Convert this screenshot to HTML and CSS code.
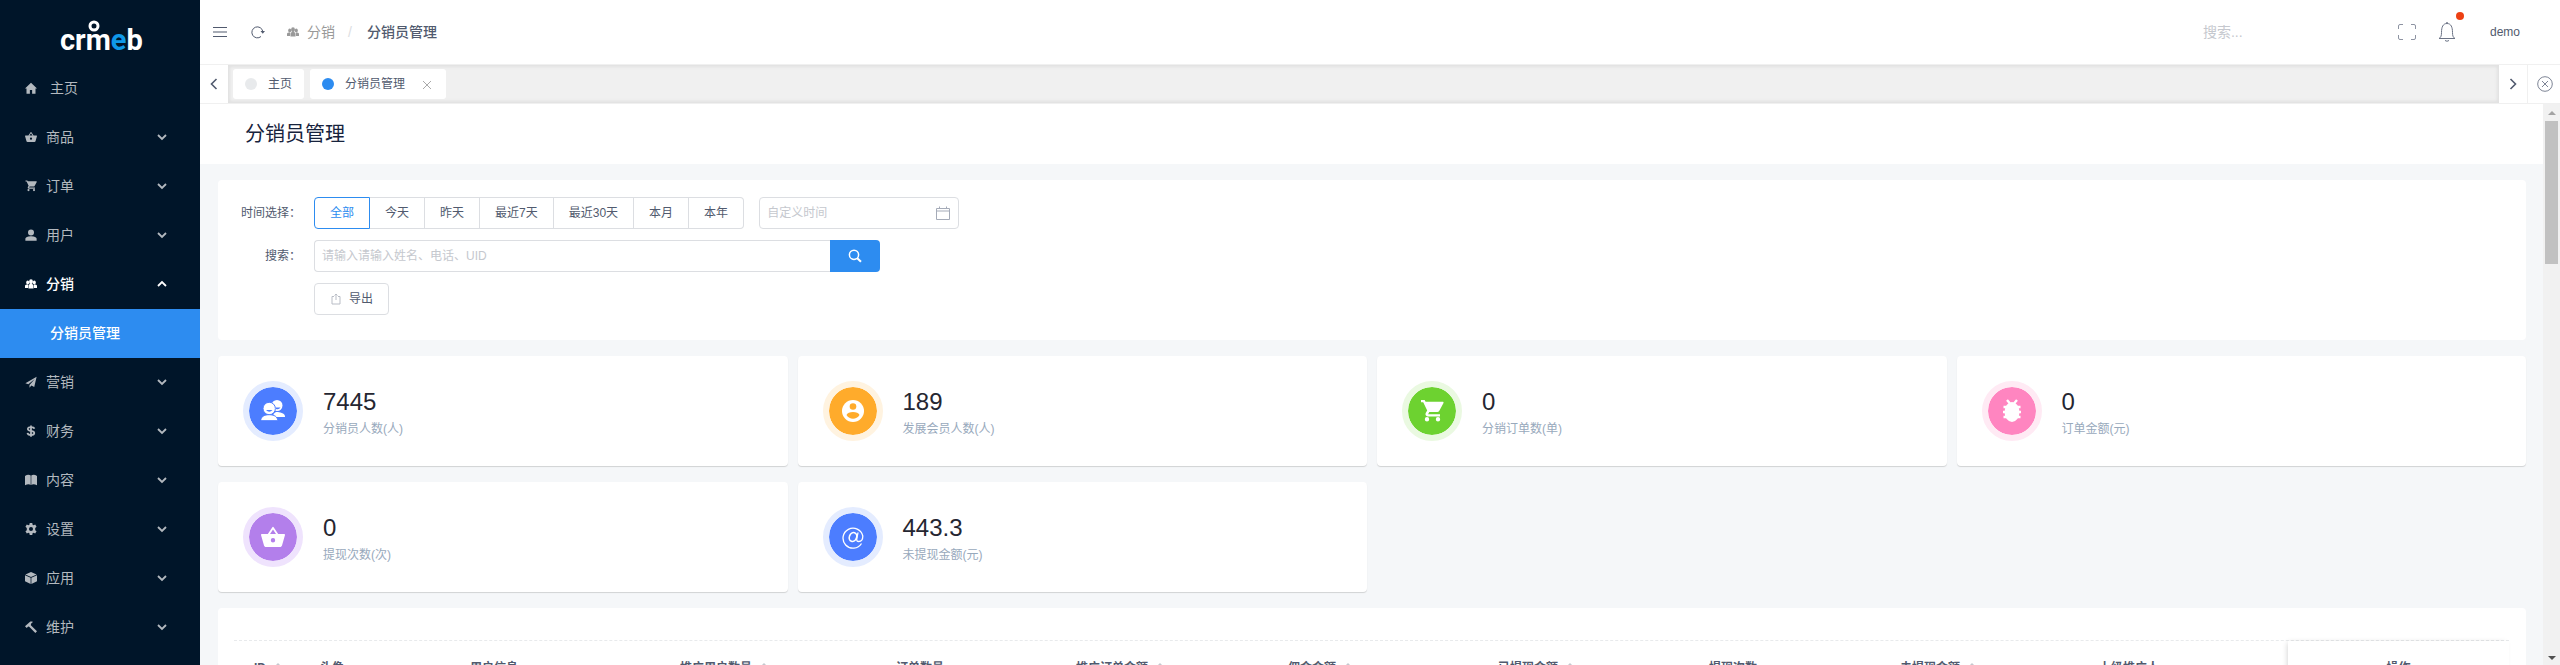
FILE: index.html
```html
<!DOCTYPE html>
<html lang="zh-CN">
<head>
<meta charset="utf-8">
<title>分销员管理</title>
<link rel="stylesheet" href="styles.css">
</head>
<body>
<svg class="sprite" aria-hidden="true">
  <symbol id="down" viewBox="0 0 12 12"><path d="M2 4l4 4 4-4" fill="none" stroke="currentColor" stroke-width="1.8"/></symbol>
  <symbol id="up" viewBox="0 0 12 12"><path d="M2 8l4-4 4 4" fill="none" stroke="currentColor" stroke-width="1.8"/></symbol>
  <symbol id="home" viewBox="0 0 16 16"><path d="M8 1L0 8.500h2V15.500h4.500v-5h3v5H14V8.500h2z"/></symbol>
  <symbol id="basket" viewBox="0 0 24 24"><path fill-rule="evenodd" d="M17.2 9L12.8 2.4a1 1 0 0 0-1.6 0L6.800 9H1c-.6 0-1 .4-1 1l3 10.500c.2.900 1 1.500 2 1.500h14c1 0 1.800-.6 2-1.500L24 10c0-.6-.4-1-1-1zM9 9l3-4.500L15 9zm3 8.500a2.200 2.200 0 1 1 0-4.400 2.200 2.200 0 0 1 0 4.400z"/></symbol>
  <symbol id="cart" viewBox="0 0 24 24"><path d="M7 18a2.200 2.200 0 1 0 0 4.400A2.200 2.200 0 0 0 7 18zM1 1v2.200h2.200l4 8.200-1.500 2.600c-.8 1.500.3 3.400 2 3.400H20v-2.200H8.100l1.200-2.200h8c.8 0 1.500-.4 1.900-1.100L23.500 4c.3-.6-.1-1.300-.8-1.300H5.600L4.600 1zm17 17a2.200 2.200 0 1 0 0 4.400 2.200 2.200 0 0 0 0-4.400z"/></symbol>
  <symbol id="person" viewBox="0 0 16 16"><circle cx="8" cy="4.500" r="4"/><path d="M.5 15.500v-2.500c0-2.400 4-3.500 7.500-3.500s7.500 1.100 7.500 3.500v2.500z"/></symbol>
  <symbol id="group" viewBox="0 0 16 16"><ellipse cx="8" cy="5" rx="2.600" ry="3.200"/><path d="M4.600 14v-3.800C4.600 8.800 6 8 8 8s3.400.8 3.400 2.200V14z"/><ellipse cx="3.600" cy="6" rx="2" ry="2.600"/><ellipse cx="12.400" cy="6" rx="2" ry="2.600"/><path d="M4 8.500v4.700H0v-2.800C0 9 1.800 8.500 4 8.500zM12 8.500v4.700h4v-2.800c0-1.400-1.800-1.900-4-1.900z"/></symbol>
  <symbol id="plane" viewBox="0 0 16 16"><path d="M15.500 1L.5 9.500l4 1.500L13 4 6 12v3.500l2.500-2.700 3.800 1.700z"/></symbol>
  <symbol id="dollar" viewBox="0 0 16 16"><path d="M12.500 5C12 3.200 10.500 2.700 8 2.700S3.800 3.500 3.800 5.200c0 3.800 8.600 1.600 8.600 5.400 0 1.900-1.800 2.700-4.400 2.700S3.600 12.500 3.300 10.500M8 .5v15" fill="none" stroke="currentColor" stroke-width="2.300"/></symbol>
  <symbol id="book" viewBox="0 0 16 16"><path d="M0 2.500C3 .5 6 .8 7.600 2v12.500C6 13.300 3 13.300 0 15zM16 2.500C13 .5 10 .8 8.400 2v12.500c1.600-1.200 4.600-1.200 7.600.5z"/></symbol>
  <symbol id="gear" viewBox="0 0 16 16"><path fill-rule="evenodd" d="M6.300 0h3.400l.4 2.300 1.300.8L13.600 2l1.800 3-1.800 1.500v3L15.400 11l-1.800 3-2.200-1-1.300.8-.4 2.200H6.300l-.4-2.200-1.300-.8-2.200 1-1.800-3 1.800-1.500v-3L.6 5l1.800-3 2.200 1.100 1.300-.8zM8 5.300a2.700 2.700 0 1 0 0 5.400 2.700 2.700 0 0 0 0-5.400z"/></symbol>
  <symbol id="cube" viewBox="0 0 16 16"><path d="M8 0l7.500 3.200L8 6.500.5 3.200zM0 4.200l7.500 3.500V16L0 12.200zM16 4.200L8.500 7.700V16l7.500-3.800z"/></symbol>
  <symbol id="hammer" viewBox="0 0 16 16"><path d="M0 7l6-5.500C7.500.5 9.500.7 10.500 1.200L8 3.600l-.2 1.900L16 13.500 13.800 16 5.600 7.500 4.200 7.400 2.300 9.300z"/></symbol>
</svg>
<div class="app">
  <aside class="side">
    <div class="logo"><span>crm</span><span class="logo-e">e</span><span>b</span><svg class="logo-ring" viewBox="0 0 12 12"><circle cx="6" cy="6" r="4" fill="none" stroke="#fff" stroke-width="3"/></svg></div>
    <nav>
      <a class="item home" href="#"><svg class="ico"><use href="#home"/></svg><span>主页</span></a>
      <a class="item" href="#"><svg class="ico"><use href="#basket"/></svg><span>商品</span><svg class="arrow"><use href="#down"/></svg></a>
      <a class="item" href="#"><svg class="ico"><use href="#cart"/></svg><span>订单</span><svg class="arrow"><use href="#down"/></svg></a>
      <a class="item" href="#"><svg class="ico"><use href="#person"/></svg><span>用户</span><svg class="arrow"><use href="#down"/></svg></a>
      <a class="item open" href="#"><svg class="ico"><use href="#group"/></svg><span>分销</span><svg class="arrow"><use href="#up"/></svg></a>
      <a class="sub" href="#">分销员管理</a>
      <a class="item" href="#"><svg class="ico"><use href="#plane"/></svg><span>营销</span><svg class="arrow"><use href="#down"/></svg></a>
      <a class="item" href="#"><svg class="ico"><use href="#dollar"/></svg><span>财务</span><svg class="arrow"><use href="#down"/></svg></a>
      <a class="item" href="#"><svg class="ico"><use href="#book"/></svg><span>内容</span><svg class="arrow"><use href="#down"/></svg></a>
      <a class="item" href="#"><svg class="ico"><use href="#gear"/></svg><span>设置</span><svg class="arrow"><use href="#down"/></svg></a>
      <a class="item" href="#"><svg class="ico"><use href="#cube"/></svg><span>应用</span><svg class="arrow"><use href="#down"/></svg></a>
      <a class="item" href="#"><svg class="ico"><use href="#hammer"/></svg><span>维护</span><svg class="arrow"><use href="#down"/></svg></a>
    </nav>
  </aside>

  <div class="main">
    <header class="top">
      <button class="plain" aria-label="菜单"><svg width="14" height="12" viewBox="0 0 14 12"><path d="M0 1.500h14M0 6h14M0 10.500h14" stroke="#515a6e" stroke-width="1.200"/></svg></button>
      <button class="plain refresh" aria-label="刷新"><svg width="14" height="14" viewBox="0 0 14 14"><path d="M10 11.500A5.500 5.500 0 1 1 11.800 6.500" fill="none" stroke="#515a6e"/><path d="M9.500 6H14l-2.200 2.800z" fill="#515a6e"/></svg></button>
      <div class="crumbs"><svg class="ico"><use href="#group"/></svg><span>分销</span><span class="slash">/</span><strong>分销员管理</strong></div>
      <input class="top-search" type="text" placeholder="搜索..." aria-label="搜索">
      <button class="plain" aria-label="全屏"><svg width="18" height="16" viewBox="0 0 18 16"><path d="M.5 5V2Q.5.5 2 .5h3M13 .5h3Q17.500.5 17.500 2v3M17.500 11v3q0 1.500-1.500 1.500h-3M5 15.500H2Q.5 15.500.5 14v-3" fill="none" stroke="#8d93a2"/></svg></button>
      <button class="plain bell" aria-label="通知"><svg width="18" height="20" viewBox="0 0 18 20"><path d="M1 16.500c2-1 2.500-3 2.500-6C3.500 5 5 1.500 9 1.500s5.500 3.500 5.500 9c0 3 .5 5 2.500 6zM7 18.500q2 1.500 4 0M8 .8h2" fill="none" stroke="#6b7385"/></svg><i class="dot"></i></button>
      <a class="user" href="#">demo</a>
    </header>

    <div class="tabs">
      <button class="tab-nav" aria-label="向左"><svg width="8" height="12" viewBox="0 0 8 12"><path d="M6.500 1l-5 5 5 5" fill="none" stroke="#515a6e" stroke-width="1.600"/></svg></button>
      <div class="strip">
        <a class="tab" href="#"><i></i><span>主页</span></a>
        <a class="tab on" href="#"><i></i><span>分销员管理</span><svg width="8" height="8" viewBox="0 0 8 8"><path d="M0 0l8 8M8 0L0 8" stroke="#aaa"/></svg></a>
      </div>
      <button class="tab-nav" aria-label="向右"><svg width="8" height="12" viewBox="0 0 8 12"><path d="M1.500 1l5 5-5 5" fill="none" stroke="#515a6e" stroke-width="1.600"/></svg></button>
      <button class="tab-close" aria-label="关闭"><svg width="16" height="16" viewBox="0 0 16 16"><path d="M5 5l6 6M11 5l-6 6" stroke="#7d8495"/><circle cx="8" cy="8" r="7.300" fill="none" stroke="#7d8495"/></svg></button>
    </div>

    <div class="view">
      <main class="page">
        <h1>分销员管理</h1>
        <div class="body">
          <form class="panel filters">
            <div class="row">
              <span class="lab">时间选择：</span>
              <div class="radios" role="radiogroup" aria-label="时间选择">
                <label><input type="radio" name="t" checked>全部</label>
                <label><input type="radio" name="t">今天</label>
                <label><input type="radio" name="t">昨天</label>
                <label><input type="radio" name="t">最近7天</label>
                <label><input type="radio" name="t">最近30天</label>
                <label><input type="radio" name="t">本月</label>
                <label><input type="radio" name="t">本年</label>
              </div>
              <div class="date"><input type="text" placeholder="自定义时间" aria-label="自定义时间"><svg width="14" height="14" viewBox="0 0 14 14"><path d="M.5 2.500h13v11H.5zM.5 5h13M3.500.5v2M10.500.5v2" fill="none" stroke="#a5abb8"/></svg></div>
            </div>
            <div class="row">
              <label class="lab" for="q">搜索：</label>
              <div class="search"><input id="q" type="text" placeholder="请输入请输入姓名、电话、UID"><button type="button" aria-label="搜索"><svg width="14" height="14" viewBox="0 0 14 14"><circle cx="6" cy="5.800" r="4.600" fill="none" stroke="#fff" stroke-width="1.500"/><path d="M9 9l4 3.800" stroke="#fff" stroke-width="2"/></svg></button></div>
            </div>
            <div class="row">
              <span class="lab"></span>
              <button class="export" type="button"><svg width="10" height="12" viewBox="0 0 10 12"><path d="M3 3.500H1v7.500h8V3.500H7M5 7V1M3.500 2.500L5 1l1.500 1.500" fill="none" stroke="#b9bdc6"/></svg>导出</button>
            </div>
          </form>

          <section class="stats">
            <div class="stat blue"><div class="ring"><svg viewBox="0 0 24 24"><circle cx="16" cy="6.500" r="5.500"/><path d="M12 18c0-3.500 2-5 4-5s8 1 8 4.500V18z"/><g stroke="#4c7dff"><circle cx="8.200" cy="9.500" r="6.200"/><path d="M-.3 21.700c0-4 3.500-6 8.500-6s8.500 2 8.500 6z"/></g><path d="M5 11h6.500q-3.200 3.500-6.500 0zM15 8.500h4.500Q18 11 15 10z" fill="#4c7dff"/></svg></div><div class="info"><b>7445</b><p>分销员人数(人)</p></div></div>
            <div class="stat orange"><div class="ring"><svg viewBox="0 0 24 24"><circle cx="12" cy="12" r="11"/><circle cx="12" cy="7.500" r="3.300" fill="#ffab2b"/><path d="M5.500 16c1-4 12-4 13 0-3 5-10 5-13 0z" fill="#ffab2b"/></svg></div><div class="info"><b>189</b><p>发展会员人数(人)</p></div></div>
            <div class="stat green"><div class="ring"><svg><use href="#cart"/></svg></div><div class="info"><b>0</b><p>分销订单数(单)</p></div></div>
            <div class="stat pink"><div class="ring"><svg viewBox="0 0 24 24"><ellipse cx="12" cy="13" rx="7.500" ry="10"/><path d="M3.500 8h17M3 13h18M3.500 18h17" stroke="#fff" stroke-width="2.600"/><path d="M7 1l3 3.500M17 1l-3 3.500" stroke="#fff" stroke-width="2.400"/></svg></div><div class="info"><b>0</b><p>订单金额(元)</p></div></div>
            <div class="stat purple"><div class="ring"><svg><use href="#basket"/></svg></div><div class="info"><b>0</b><p>提现次数(次)</p></div></div>
            <div class="stat blue"><div class="ring"><svg viewBox="0 0 24 24"><g fill="none" stroke="#fff"><path d="M20.500 18.500A10 10 0 1 1 21.800 11c0 4-2.200 5.500-4 5.500s-2.300-1-2-2.800l1.200-6.200" stroke-width="1.300"/><ellipse cx="12" cy="12" rx="3.600" ry="4.600" transform="rotate(20 12 12)" stroke-width="1.600"/></g></svg></div><div class="info"><b>443.3</b><p>未提现金额(元)</p></div></div>
          </section>

          <section class="panel list">
            <table>
              <colgroup><col class="c66"><col class="c150"><col class="c210"><col class="c216"><col class="c180"><col class="c212"><col class="c210"><col class="c211"><col class="c191"><col class="c199"><col class="c209"><col class="c221"></colgroup>
              <thead><tr>
                <th class="sort">ID</th><th>头像</th><th>用户信息</th><th class="sort">推广用户数量</th><th>订单数量</th><th class="sort">推广订单金额</th><th class="sort">佣金金额</th><th class="sort">已提现金额</th><th>提现次数</th><th class="sort">未提现金额</th><th>上级推广人</th><th class="fixed">操作</th>
              </tr></thead>
            </table>
          </section>
        </div>
      </main>
      <div class="scroll" aria-hidden="true"><i class="tri up"></i><i class="thumb"></i><i class="tri down"></i></div>
    </div>
  </div>
</div>
</body>
</html>
```
FILE: styles.css
```css
* { box-sizing: border-box; }
body {
  margin: 0;
  font: 12px/18px "Liberation Sans", "Noto Sans CJK SC", sans-serif;
  color: #515a6e;
  overflow: hidden;
}
a { color: inherit; text-decoration: none; }
button, input { font: inherit; color: inherit; }
button { cursor: pointer; }
svg { fill: currentColor; flex: none; display: block; }
.sprite { position: absolute; width: 0; height: 0; }
input::placeholder { color: #c5c8ce; opacity: 1; }

.app { display: flex; height: 100vh; overflow: hidden; }

/* sidebar */
.side { width: 200px; flex: none; background: #001529; color: #b3b9bf; }
.logo {
  position: relative;
  height: 64px;
  padding: 18px 0 0 60px;
  display: flex;
  font: 700 29px/44px Roboto, sans-serif;
  color: #fff;
}
.logo-e { color: #0f98e8; }
.logo-ring { position: absolute; left: 88px; top: 20px; width: 12px; height: 12px; }
.item {
  display: flex;
  align-items: center;
  gap: 9px;
  height: 49px;
  padding: 0 32px 2px 25px;
  font-size: 14px;
}
.home { gap: 13px; }
.ico { width: 12px; height: 12px; }
.arrow { width: 12px; height: 12px; margin-left: auto; }
.open { color: #fff; font-weight: 500; }
.sub {
  display: flex;
  align-items: center;
  height: 49px;
  padding: 0 0 2px 50px;
  background: #2d8cf0;
  color: #fff;
  font-size: 14px;
  font-weight: 500;
}

/* header */
.main { flex: 1; min-width: 0; display: flex; flex-direction: column; }
.top { display: flex; align-items: center; height: 64px; flex: none; padding: 0 40px 0 13px; }
.plain { border: 0; padding: 0; background: none; }
.refresh { margin-left: 24px; }
.crumbs { display: flex; align-items: center; margin-left: 22px; font-size: 14px; color: #999; }
.crumbs span { margin-left: 8px; }
.crumbs .slash { margin: 0 15px 0 13px; color: #dcdee2; }
.crumbs strong { font-weight: 500; color: #515a6e; }
.top-search { width: 180px; margin: 0 15px 0 auto; padding: 0; border: 0; outline: 0; font-size: 14px; }
.bell { position: relative; margin: 0 34px 0 22px; }
.dot { position: absolute; right: -8px; top: -10px; width: 8px; height: 8px; border-radius: 50%; background: #ed4014; }

/* tabs */
.tabs { display: flex; height: 40px; flex: none; border: solid #f0f0f0; border-width: 1px 0; }
.tab-nav { width: 28px; border: 0; background: #fff; padding: 0; display: grid; place-items: center; }
.strip {
  flex: 1;
  display: flex;
  align-items: center;
  gap: 6px;
  padding-left: 5px;
  background: #f0f0f0;
  box-shadow: inset 0 0 3px 2px rgba(100, 100, 100, .1);
}
.tab { display: flex; align-items: center; height: 30px; padding: 0 12px; background: #fff; border-radius: 3px; }
.tab i { width: 12px; height: 12px; margin-right: 11px; border-radius: 50%; background: #e8eaec; }
.tab svg { margin: 2px 3px 0 18px; }
.on i { background: #2d8cf0; }
.tab-close { width: 33px; border: 0; border-left: 1px solid #f0f0f0; background: #fff; padding: 0 0 0 2px; display: grid; place-items: center; }

/* page */
.view { flex: 1; min-height: 0; display: flex; }
.page { flex: 1; min-width: 0; overflow: hidden; background: #f5f7f9; }
h1 { margin: 0; padding: 0 45px; font-size: 20px; font-weight: 400; line-height: 60px; background: #fff; color: #17233d; }
.body { display: flex; flex-direction: column; gap: 16px; padding: 16px 17px 16px 18px; }
.panel { background: #fff; border-radius: 4px; }

.filters { display: flex; flex-direction: column; gap: 11px; padding: 17px 16px 25px; }
.row { display: flex; align-items: center; }
.lab { width: 67px; margin-right: 13px; text-align: right; white-space: nowrap; }
.radios { display: flex; }
.radios label {
  height: 32px;
  padding: 0 15px;
  line-height: 30px;
  border: solid #dcdee2;
  border-width: 1px 1px 1px 0;
}
.radios input { position: absolute; opacity: 0; }
.radios label:first-child { border-left-width: 1px; border-radius: 4px 0 0 4px; }
.radios label:last-child { border-radius: 0 4px 4px 0; }
.radios label:has(:checked) { border-color: #2d8cf0; color: #2d8cf0; }
.date { display: flex; align-items: center; width: 200px; height: 32px; margin-left: 15px; padding: 0 8px 0 7px; border: 1px solid #dcdee2; border-radius: 4px; }
.date input { flex: 1; min-width: 0; border: 0; padding: 0; outline: 0; }
.search { display: flex; width: 566px; height: 32px; }
.search input { flex: 1; min-width: 0; border: 1px solid #dcdee2; border-right: 0; border-radius: 4px 0 0 4px; padding: 0 7px; }
.search button { width: 50px; border: 0; border-radius: 0 4px 4px 0; background: #2d8cf0; display: grid; place-items: center; padding: 0; }
.export { display: flex; align-items: center; gap: 8px; height: 32px; padding: 0 15px 0 16px; background: #fff; border: 1px solid #dcdee2; border-radius: 4px; }

.stats { display: grid; grid-template-columns: repeat(4, 1fr); gap: 16px 10px; }
.stat {
  display: flex;
  align-items: center;
  gap: 20px;
  height: 110px;
  padding: 0 25px;
  background: #fff;
  border-radius: 4px;
  box-shadow: 0 1px 1px rgba(0, 0, 0, .15);
}
.ring { width: 60px; height: 60px; border: 6px solid; border-radius: 50%; display: grid; place-items: center; }
.ring svg { width: 24px; height: 24px; fill: #fff; }
.info { padding-top: 4px; }
.stat b { display: block; font-size: 24px; line-height: 28px; font-weight: 400; color: #252631; }
.stat p { margin: 4px 0 0; color: #98a9bc; }
.blue .ring { background: #4c7dff; border-color: #e4ecff; }
.orange .ring { background: #ffab2b; border-color: #fff3e0; }
.green .ring { background: #6dd230; border-color: #eaf9e1; }
.pink .ring { background: #ff85c0; border-color: #ffeaf4; }
.purple .ring { background: #b37feb; border-color: #efe3fd; }
.stat .ring { background-clip: padding-box; }

.list { padding: 32px 17px 0 16px; }
table { width: 100%; table-layout: fixed; border-spacing: 0; border-top: 1px dashed #e8eaec; }
th { height: 54px; padding: 0 0 0 20px; text-align: left; font-weight: 700; white-space: nowrap; }
.sort::after { content: ""; display: inline-block; margin-left: 8px; vertical-align: 5px; border: solid transparent; border-width: 0 4px 4px; border-bottom-color: #c5c8ce; }
.fixed { padding: 0; text-align: center; box-shadow: -2px 0 6px -2px rgba(0, 0, 0, .2); }
.c66 { width: 66px; } .c150 { width: 150px; } .c180 { width: 180px; } .c191 { width: 191px; }
.c199 { width: 199px; } .c209 { width: 209px; } .c210 { width: 210px; } .c211 { width: 211px; }
.c212 { width: 212px; } .c216 { width: 216px; } .c221 { width: 221px; }

/* scrollbar */
.scroll { display: flex; flex-direction: column; align-items: center; width: 17px; flex: none; padding: 7px 0 5px; background: #f1f1f1; }
.thumb { width: 13px; height: 26%; margin-top: 6px; background: #c1c1c1; }
.tri { border: solid transparent; border-width: 0 4px 4px; }
.tri.up { border-bottom-color: #a3a3a3; }
.tri.down { margin-top: auto; border-width: 4px 4px 0; border-top-color: #505050; }
```
